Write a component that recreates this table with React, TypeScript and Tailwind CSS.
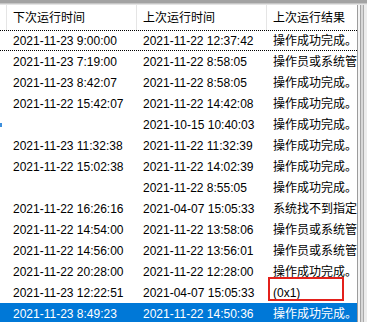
import React from 'react';

interface TaskRow {
  next: string;
  last: string;
  result: string;
}

const rows: TaskRow[] = [
  { next: '2021-11-23 9:00:00', last: '2021-11-22 12:37:42', result: '操作成功完成。' },
  { next: '2021-11-23 7:19:00', last: '2021-11-22 8:58:05', result: '操作员或系统管理员拒绝了请求。' },
  { next: '2021-11-23 8:42:07', last: '2021-11-22 8:58:05', result: '操作成功完成。' },
  { next: '2021-11-22 15:42:07', last: '2021-11-22 14:42:08', result: '操作成功完成。' },
  { next: '', last: '2021-10-15 10:40:03', result: '操作成功完成。' },
  { next: '2021-11-23 11:32:38', last: '2021-11-22 11:32:39', result: '操作成功完成。' },
  { next: '2021-11-22 15:02:38', last: '2021-11-22 14:02:39', result: '操作成功完成。' },
  { next: '', last: '2021-11-22 8:55:05', result: '操作成功完成。' },
  { next: '2021-11-22 16:26:16', last: '2021-04-07 15:05:33', result: '系统找不到指定的文件。' },
  { next: '2021-11-22 14:54:00', last: '2021-11-22 13:58:06', result: '操作员或系统管理员拒绝了请求。' },
  { next: '2021-11-22 14:56:00', last: '2021-11-22 13:56:01', result: '操作员或系统管理员拒绝了请求。' },
  { next: '2021-11-22 20:28:00', last: '2021-11-22 12:28:00', result: '操作成功完成。' },
  { next: '2021-11-23 12:22:51', last: '2021-04-07 15:05:33', result: '(0x1)' },
  { next: '2021-11-23 8:49:23', last: '2021-11-22 14:50:36', result: '操作成功完成。' },
];

const font = { fontFamily: '"Liberation Sans", "Noto Sans CJK SC", sans-serif' };

const App: React.FC = () => {
  return (
    <div className="w-[367px] h-[322px] overflow-hidden bg-white flex flex-col text-[12px] text-black" style={font}>
      {/* window edge on top */}
      <div className="h-[3px] bg-[#a3a3a3] shrink-0" />
      <div className="h-[1px] bg-[#c6c6c6] shrink-0" />
      <div className="h-[1px] bg-[#e4e4e4] shrink-0" />

      <div className="flex flex-1 min-h-0">
        {/* List view */}
        <div className="w-[357px] overflow-hidden flex flex-col">
          {/* Header */}
          <div className="grid grid-cols-[7px_130px_130px_90px] h-[25px] shrink-0">
            <div className="border-r border-[#e5e5e5]" />
            <div className="border-r border-[#e5e5e5] pl-[6px] flex items-center whitespace-nowrap">下次运行时间</div>
            <div className="border-r border-[#e5e5e5] pl-[6px] flex items-center whitespace-nowrap">上次运行时间</div>
            <div className="pl-[6px] flex items-center whitespace-nowrap overflow-hidden">上次运行结果</div>
          </div>

          {/* Rows */}
          {rows.map((row, i) => {
            const focused = i === 0;
            const selected = i === rows.length - 1;
            const marked = i === 12;
            return (
              <div
                key={i}
                className={`grid grid-cols-[7px_130px_130px_90px] h-[21px] shrink-0 whitespace-nowrap ${
                  focused ? 'border-y border-dotted border-black' : ''
                } ${selected ? 'bg-[#0078d7] text-white' : ''}`}
              >
                <div className="flex items-center">
                  {i === 4 && <span className="w-[2px] h-[4px] bg-[#3d8fdc]" />}
                </div>
                <div className="pl-[6px] flex items-center">{row.next}</div>
                <div className="pl-[6px] flex items-center">{row.last}</div>
                <div className="pl-[6px] flex items-center relative">
                  <span className="overflow-hidden">{row.result}</span>
                  {marked && (
                    <span className="absolute left-[1px] top-[-5px] w-[76px] h-[24px] border-2 border-[#e3201b]" />
                  )}
                </div>
              </div>
            );
          })}
        </div>

        {/* window frame on the right */}
        <div className="flex flex-1">
          <div className="w-[1px] bg-[#9c9c9c]" />
          <div className="w-[2px] bg-[#f4f4f4]" />
          <div className="w-[1px] bg-[#a3a3a3]" />
          <div className="w-[2px] bg-[#d8d8d8]" />
          <div className="w-[1px] bg-[#ababab]" />
          <div className="flex-1 bg-[#ececec]" />
        </div>
      </div>
    </div>
  );
};

export default App;
